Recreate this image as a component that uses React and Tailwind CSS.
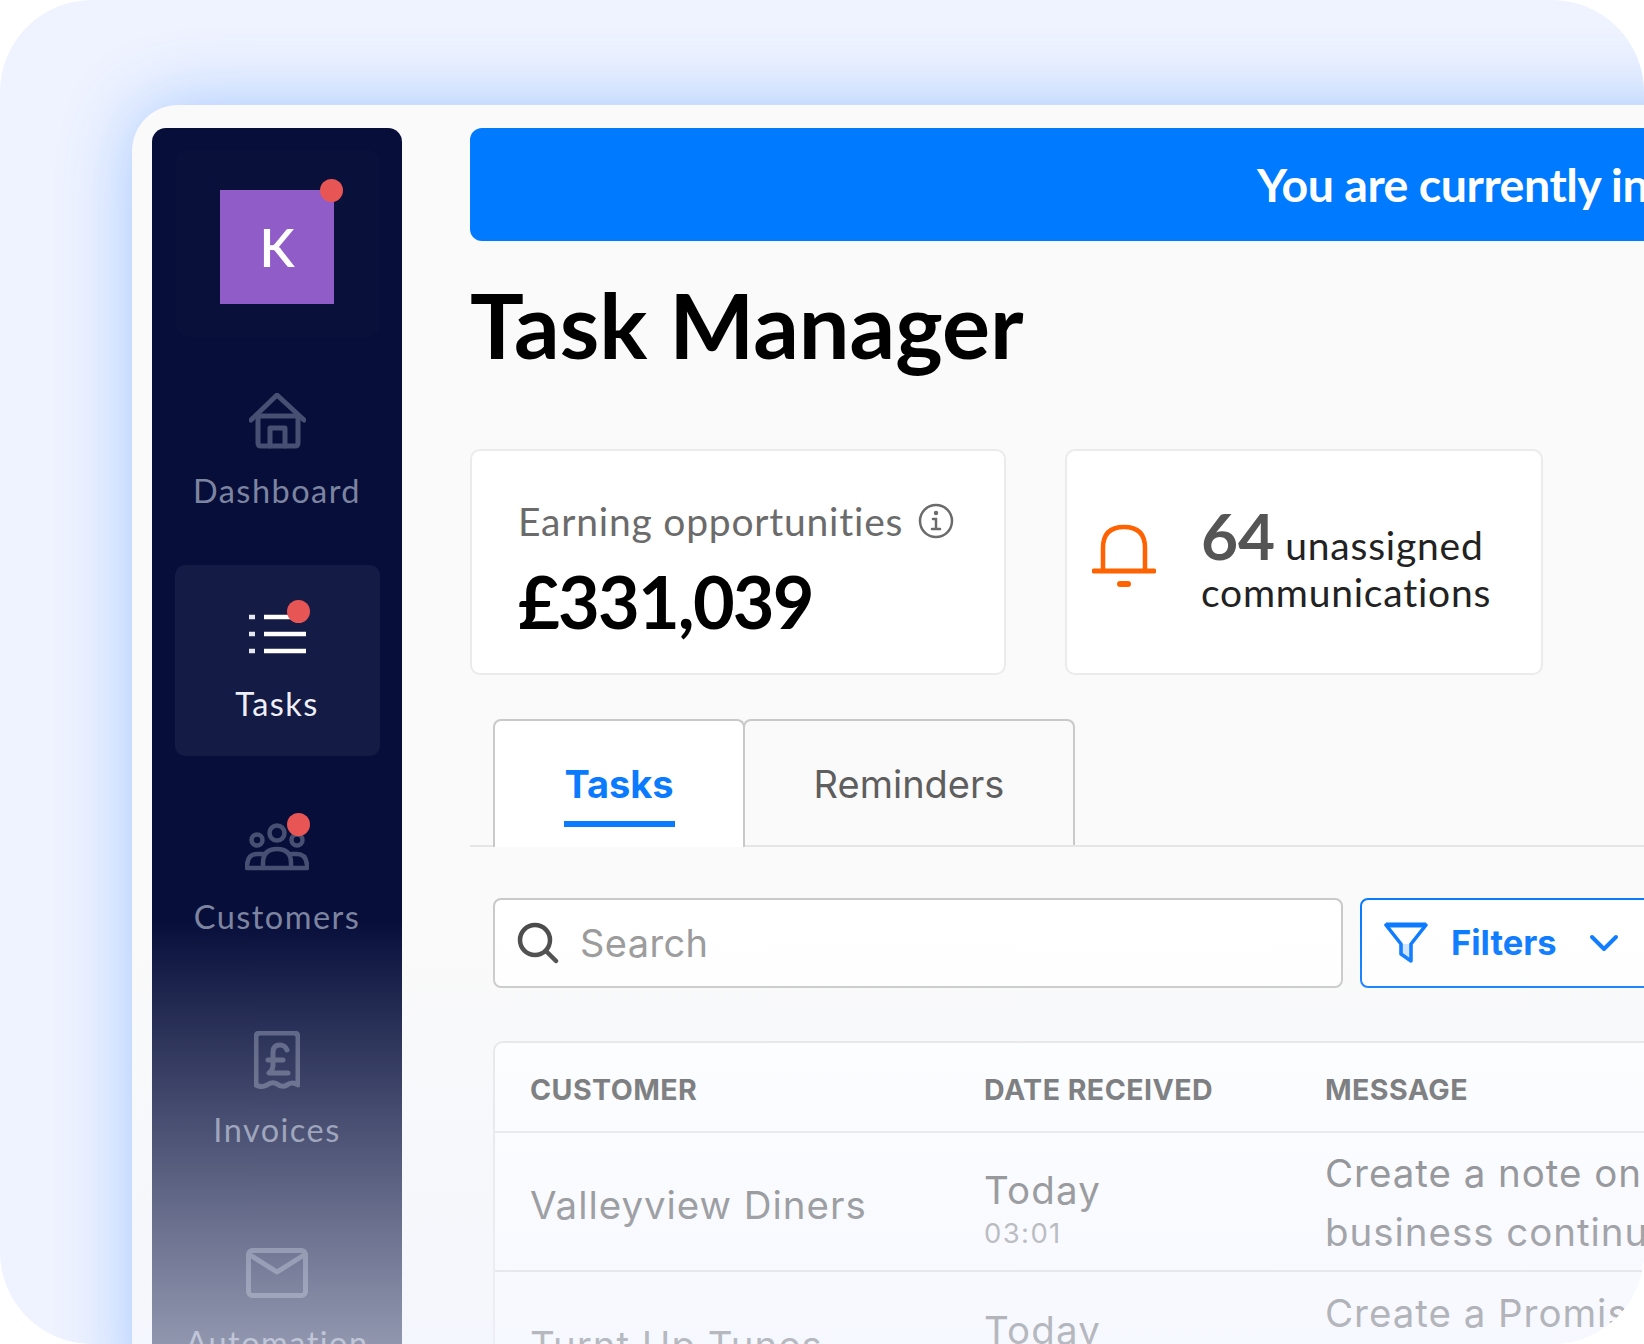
const lato = "font-['Lato',sans-serif]";

function Nav({ label, active, dot, children }) {
  return (
    <div className={`relative flex h-[191px] w-[205px] shrink-0 flex-col items-center rounded-[10px] pt-[37px] ${active ? "bg-[#141b45]" : ""}`}>
      <div className="relative flex h-[64px] w-[64px] items-center justify-center">
        {children}
        {dot && <span className="absolute right-[-1px] top-[-2px] h-[23px] w-[23px] rounded-full bg-[#e85555]" />}
      </div>
      <div className={`mt-[19px] text-[32.5px] leading-[38px] tracking-[0.045em] ${active ? "text-[#eef0f5]" : "text-[#7d84a0]"}`}>{label}</div>
    </div>
  );
}

const stroke = { fill: "none", stroke: "#474f72", strokeWidth: 5, strokeLinecap: "round", strokeLinejoin: "round" };

function Row({ name, time, m1, m2, border }) {
  return (
    <div className={`grid h-[139px] grid-cols-[454px_341px_1fr] items-center whitespace-nowrap pl-[35px] text-[38.5px] tracking-[0.025em] text-[#666] ${border ? "border-b-2 border-[#dcdcdc]" : ""}`}>
      <div className="mt-[6px] leading-[44px]">{name}</div>
      <div className="mt-[20px]">
        <div className="leading-[42px] tracking-[0.03em]">Today</div>
        {time && <div className="text-[27.5px] leading-[44px] tracking-[0.05em] text-[#929292]">{time}</div>}
      </div>
      <div className="mt-[2px] leading-[59px]">
        <div>{m1}</div>
        <div>{m2}</div>
      </div>
    </div>
  );
}

export default function App() {
  return (
    <div className="h-[1344px] w-[1644px] overflow-hidden bg-white font-['Inter',sans-serif]">
      <div className="h-[1344px] w-[1644px] overflow-hidden rounded-[92px] bg-[#eff3ff] pl-[132px] pt-[105px]">
        <div className="relative flex h-[1300px] w-[1700px] overflow-hidden rounded-tl-[46px] bg-[#fafafa] pl-[20px] pt-[23px] shadow-[0_0_75px_rgba(0,110,255,0.32)]">
          <aside className={`flex h-[1300px] w-[250px] shrink-0 flex-col items-center gap-[22px] rounded-t-[14px] bg-[#070e3a] pt-[22px] ${lato}`}>
            <div className="-mb-[7px] flex h-[187px] w-[203px] shrink-0 items-start justify-center rounded-[12px] bg-[#091039] pt-[40px]">
              <div className="relative flex h-[114px] w-[114px] items-center justify-center bg-[#905cc8] text-[52px] font-semibold text-white">
                K
                <span className="absolute right-[-9px] top-[-11px] h-[23px] w-[23px] rounded-full bg-[#e85555]" />
              </div>
            </div>
            <Nav label="Dashboard">
              <svg width="57" height="56" viewBox="0 0 57 56" {...stroke}>
                <path d="M2 27 L28 2 L55 27" />
                <path d="M8 23 H49" />
                <path d="M9 23 V50 Q9 53 12 53 H46 Q49 53 49 50 V23" />
                <path d="M21 53 V35 H36 V53" />
              </svg>
            </Nav>
            <Nav label="Tasks" active dot>
              <svg width="58" height="44" viewBox="0 0 58 44" fill="none" stroke="#ffffff" strokeWidth="4.5">
                <path d="M1 5 H7 M1 22 H7 M1 39 H7" strokeWidth="4.5" stroke="#e6e8f0" />
                <path d="M16 5 H58 M16 22 H58 M16 39 H58" />
              </svg>
            </Nav>
            <Nav label="Customers" dot>
              <svg width="64" height="52" viewBox="0 0 64 52" {...stroke} strokeWidth="4.5">
                <circle cx="32" cy="12" r="7.5" />
                <circle cx="12" cy="19" r="5.5" />
                <circle cx="52" cy="19" r="5.5" />
                <path d="M18 47 V42 Q18 28 32 28 Q46 28 46 42 V47" />
                <path d="M18 33 H12 Q3 33 2 44 V47 H62 V44 Q61 33 52 33 H46" />
              </svg>
            </Nav>
            <Nav label="Invoices">
              <svg width="46" height="58" viewBox="0 0 46 58" {...stroke}>
                <path d="M2 6 Q2 2 6 2 H40 Q44 2 44 6 V54 Q38 50 33 54 Q28 57 23 53 Q18 50 13 54 Q7 57 2 54 Z" />
                <path d="M33 19 Q31 14 26 14 Q19 14 19 21 V34 Q19 39 15 42 H34 M14 29 H29" />
              </svg>
            </Nav>
            <Nav label="Automation">
              <svg width="62" height="50" viewBox="0 0 62 50" {...stroke}>
                <rect x="2.5" y="2.5" width="57" height="45" rx="4" />
                <path d="M4 7 L31 24 L58 7" />
              </svg>
            </Nav>
          </aside>

          <main className="ml-[68px] w-[1360px] shrink-0">
            <div className={`flex h-[113px] items-center overflow-hidden whitespace-nowrap rounded-l-[12px] bg-[#007aff] pl-[787px] text-[46.5px] font-bold tracking-[-0.01em] text-white ${lato}`}>
              You are currently in demo mode
            </div>
            <h1 className={`h-[208px] pt-[28px] text-[90px] font-bold leading-[110px] text-black ${lato}`}>Task Manager</h1>

            <div className={`flex gap-[59px] ${lato}`}>
              <div className="h-[226px] w-[536px] rounded-[10px] border-2 border-[#ebebeb] bg-white pl-[46px] pt-[46px]">
                <div className="flex items-center gap-[15px] text-[39px] leading-[48px] tracking-[0.02em] text-[#6b6b6b]">
                  Earning opportunities
                  <svg width="36" height="36" viewBox="0 0 36 36" fill="none" stroke="#6b6b6b" strokeWidth="2.5" strokeLinecap="round">
                    <circle cx="18" cy="18" r="16" />
                    <path d="M15 16 H18 V26 M14 26 H22" />
                    <circle cx="18" cy="10" r="1" fill="#6b6b6b" />
                  </svg>
                </div>
                <div className="mt-[14px] text-[72px] font-bold leading-[84px] tracking-[-0.025em] text-black">£331,039</div>
              </div>
              <div className="flex h-[226px] w-[478px] items-center rounded-[10px] border-2 border-[#ebebeb] bg-white pl-[25px]">
                <svg className="-mt-[12px]" width="64" height="64" viewBox="0 0 64 64" fill="none" stroke="#ff6200" strokeWidth="4.5" strokeLinecap="round">
                  <path d="M11 46 V24 Q11 3 32 3 Q53 3 53 24 V46" />
                  <path d="M2 47 H62" strokeWidth="5" />
                  <path d="M28 60 H36" strokeWidth="6" />
                </svg>
                <div className="ml-[45px] text-[39px] leading-[50px] tracking-[0.02em] text-[#222]">
                  <div className="-mb-[4px] -mt-[6px] flex items-baseline gap-[10px]">
                    <span className="text-[64px] font-bold leading-[70px] tracking-normal text-[#555]">64</span>
                    <span>unassigned</span>
                  </div>
                  <div>communications</div>
                </div>
              </div>
            </div>

            <div className="mt-[44px] flex h-[128px] border-b-2 border-[#e6e6e6] pl-[23px]">
              <div className="z-10 -mb-[2px] flex h-[128px] w-[252px] justify-center rounded-t-[8px] border-2 border-b-0 border-[#c9c9c9] bg-white pt-[39px] text-[38px] font-bold text-[#0a7aff]">
                <div className="h-[67px] w-[111px] border-b-[6px] border-[#0a7aff] text-center leading-[48px]">Tasks</div>
              </div>
              <div className="-ml-[2px] flex h-[126px] w-[332px] justify-center rounded-t-[8px] border-2 border-b-0 border-[#c9c9c9] pt-[39px] text-[38px] leading-[48px] text-[#5e5e5e]">Reminders</div>
            </div>

            <div className="ml-[23px] mt-[51px] flex h-[90px] gap-[17px]">
              <div className="flex w-[850px] items-center rounded-[8px] border-2 border-[#c9c9c9] bg-white pl-[22px] text-[38px] text-[#999]">
                <svg width="42" height="42" viewBox="0 0 42 42" fill="none" stroke="#4a4a4a" strokeWidth="4.5" strokeLinecap="round">
                  <circle cx="18" cy="18" r="15" />
                  <path d="M29 29 L39 39" />
                </svg>
                <span className="ml-[21px] tracking-[0.01em]">Search</span>
              </div>
              <div className="flex w-[420px] items-center rounded-[8px] border-2 border-[#0a7aff] bg-white pl-[22px] text-[34.5px] font-bold text-[#0a7aff]">
                <svg width="44" height="42" viewBox="0 0 44 42" fill="none" stroke="#0a7aff" strokeWidth="3.6" strokeLinejoin="round">
                  <path d="M17 22 H27 V38 L17 32 Z" fill="#cfe4ff" stroke="none" />
                  <path d="M2 3 H42 L27 22 V39 L17 32 V22 Z" />
                  <path d="M2 3 H42" strokeWidth="5" />
                </svg>
                <span className="ml-[23px]">Filters</span>
                <svg className="ml-[32px]" width="30" height="18" viewBox="0 0 30 18" fill="none" stroke="#0a7aff" strokeWidth="4" strokeLinecap="round" strokeLinejoin="round">
                  <path d="M3 3 L15 15 L27 3" />
                </svg>
              </div>
            </div>

            <div className="ml-[23px] mt-[53px] rounded-tl-[10px] border-2 border-[#e6e6e6] bg-white">
              <div className="grid h-[90px] grid-cols-[454px_341px_1fr] items-center border-b-2 border-[#e6e6e6] pl-[35px] pt-[6px] text-[28.6px] font-bold tracking-[0.015em] text-[#5c5c5c]">
                <div>CUSTOMER</div>
                <div>DATE RECEIVED</div>
                <div>MESSAGE</div>
              </div>
              <Row name="Valleyview Diners" time="03:01" m1="Create a note on the" m2="business continuity" border />
              <Row name="Turnt Up Tunes" time="03:01" m1="Create a Promise" m2="to pay" />
            </div>
          </main>

          <div className="pointer-events-none absolute inset-x-0 bottom-0 h-[485px] bg-gradient-to-b from-[rgba(240,244,255,0)] to-[rgba(240,244,255,0.68)]" />
        </div>
      </div>
    </div>
  );
}
